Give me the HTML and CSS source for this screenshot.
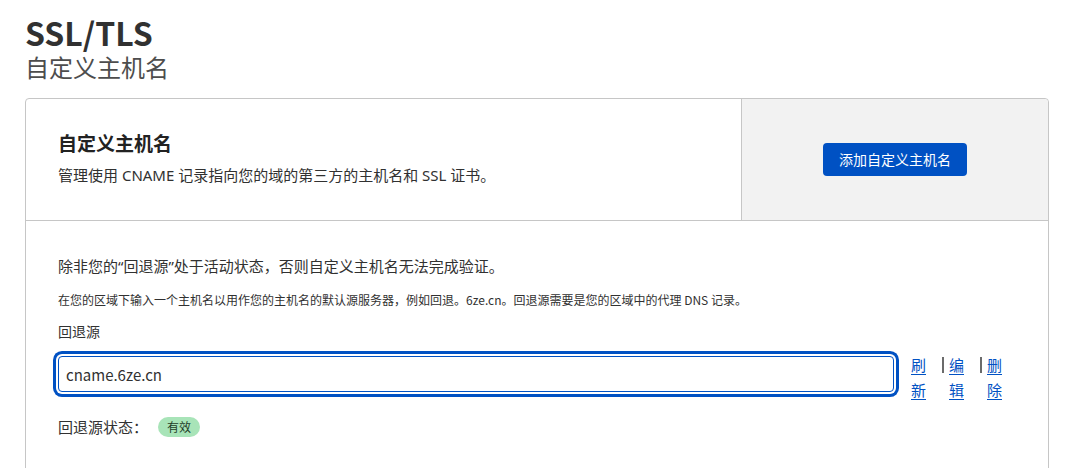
FILE: index.html
```html
<!DOCTYPE html>
<html lang="zh-CN">
<head>
<meta charset="utf-8">
<title>SSL/TLS - 自定义主机名</title>
<link rel="stylesheet" href="styles.css">
</head>
<body>
<div class="page">
  <h1 class="page-title">SSL/TLS</h1>
  <div class="page-subtitle">自定义主机名</div>

  <section class="card">
    <div class="card-head">
      <div class="head-main">
        <h2 class="head-title">自定义主机名</h2>
        <p class="head-desc">管理使用 CNAME 记录指向您的域的第三方的主机名和 SSL 证书。</p>
      </div>
      <div class="head-side">
        <button class="btn-primary" type="button">添加自定义主机名</button>
      </div>
    </div>

    <div class="card-body">
      <p class="lead">除非您的“回退源”处于活动状态，否则自定义主机名无法完成验证。</p>
      <p class="hint">在您的区域下输入一个主机名以用作您的主机名的默认源服务器，例如回退。6ze.cn。回退源需要是您的区域中的代理 DNS 记录。</p>
      <label class="field-label" for="fallback">回退源</label>
      <div class="field-row">
        <div class="input-wrap">
          <input id="fallback" class="text-input" type="text" value="cname.6ze.cn">
        </div>
        <div class="actions">
          <span class="action"><a class="action-link" href="#">刷新</a></span>
          <span class="action"><span class="sep"></span><a class="action-link" href="#">编辑</a></span>
          <span class="action"><span class="sep"></span><a class="action-link" href="#">删除</a></span>
        </div>
      </div>
      <div class="status-row">
        <span class="status-label">回退源状态：</span>
        <span class="badge">有效</span>
      </div>
    </div>
  </section>
</div>
</body>
</html>
```

FILE: styles.css
```css
* { box-sizing: border-box; }

html, body {
  margin: 0;
  padding: 0;
  background: #ffffff;
}

body {
  font-family: "Noto Sans CJK SC", "Noto Sans", sans-serif;
  color: #313131;
}

.page {
  padding: 13px 25px 0 25px;
}

.page-title {
  margin: 0;
  font-size: 32px;
  line-height: 38px;
  font-weight: 700;
  color: #313131;
}

.page-subtitle {
  font-size: 24px;
  line-height: 32px;
  color: #4d4d4d;
  margin-bottom: 15px;
}

.card {
  border: 1px solid #c6c6c6;
  border-radius: 4px;
  min-height: 400px;
}

.card-head {
  display: flex;
  height: 122px;
  border-bottom: 1px solid #c6c6c6;
}

.head-main {
  flex: 1;
  display: flex;
  flex-direction: column;
  justify-content: center;
  padding: 0 32px 3px 32px;
}

.head-title {
  margin: 0;
  font-size: 19px;
  line-height: 26px;
  font-weight: 700;
  color: #222;
}

.head-desc {
  margin: 8px 0 0 0;
  font-family: "Noto Sans", "Noto Sans CJK SC", sans-serif;
  font-size: 15px;
  line-height: 22px;
  color: #313131;
}

.head-side {
  width: 307px;
  background: #f2f2f2;
  border-left: 1px solid #c6c6c6;
  border-top-right-radius: 4px;
  display: flex;
  align-items: center;
  justify-content: center;
}

.btn-primary {
  font-family: inherit;
  font-size: 14px;
  line-height: 20px;
  color: #ffffff;
  background: #0051c3;
  border: none;
  border-radius: 4px;
  padding: 6px 16px 7px;
  cursor: pointer;
}

.card-body {
  padding: 34px 32px 0 32px;
}

.lead {
  margin: 0;
  font-family: "Noto Sans", "Noto Sans CJK SC", sans-serif;
  font-size: 15px;
  line-height: 22px;
  color: #313131;
}

.hint {
  margin: 14px 0 0 0;
  font-size: 12px;
  line-height: 18px;
  color: #313131;
}

.field-label {
  display: block;
  margin-top: 12px;
  font-size: 14px;
  line-height: 20px;
  color: #313131;
}

.field-row {
  display: flex;
  align-items: flex-start;
  gap: 17px;
  margin-top: 15px;
}

.input-wrap {
  flex: 1;
}

.text-input {
  display: block;
  width: 100%;
  height: 36px;
  border: 1px solid #0051c3;
  border-radius: 4px;
  padding: 0 7px;
  font-family: inherit;
  font-size: 15px;
  color: #313131;
  outline: none;
  box-shadow: 0 0 0 2px #ffffff, 0 0 0 5px #0051c3;
}

.actions {
  width: 105px;
  display: flex;
  gap: 15px;
  margin-top: -4px;
}

.action {
  display: flex;
  align-items: flex-start;
}

.sep {
  display: inline-block;
  width: 2px;
  height: 16px;
  margin-top: 5px;
  margin-right: 5px;
  background: #6b6b6b;
}

.action-link {
  display: inline-block;
  width: 16px;
  font-size: 15px;
  line-height: 25px;
  color: #0051c3;
  text-decoration: underline;
  text-underline-offset: 3px;
}

.status-row {
  display: flex;
  align-items: center;
  margin-top: 14px;
}

.status-label {
  font-size: 15px;
  line-height: 22px;
  color: #313131;
}

.badge {
  margin-left: 10px;
  font-size: 12px;
  line-height: 20px;
  padding: 0 9px;
  border-radius: 10px;
  background: #a8e4b8;
  color: #1f3d28;
}
```
